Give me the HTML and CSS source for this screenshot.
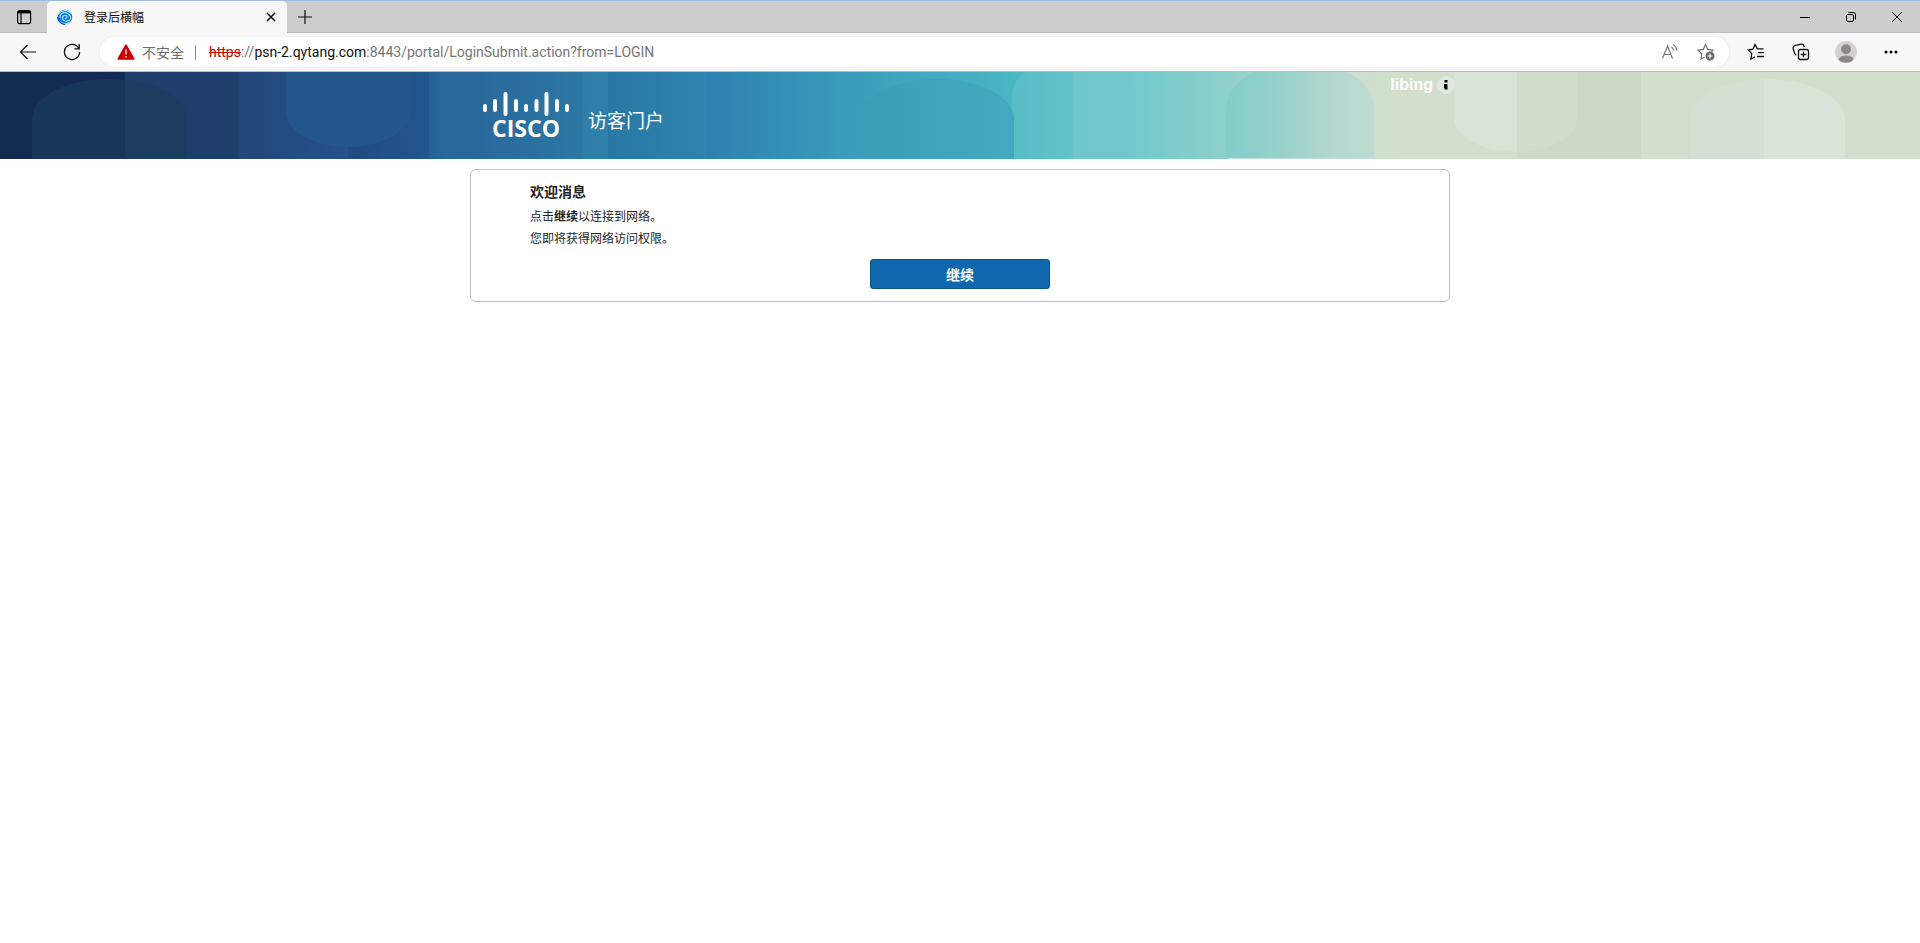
FILE: index.html
```html
<!DOCTYPE html>
<html lang="zh-CN">
<head>
<meta charset="utf-8">
<meta name="viewport" content="width=device-width, initial-scale=1">
<title>登录后横幅</title>
<link rel="stylesheet" href="styles.css">
</head>
<body>
<div class="tabstrip">
  <button class="icon-btn tab-menu" aria-label="标签操作菜单">
    <svg width="16" height="16" viewBox="0 0 16 16" fill="none" stroke="#000"><rect x="1.6" y="1.6" width="13" height="13" rx="2" stroke-width="1.2"/><path d="M1.6 3.2h13" stroke-width="2.400"/><path d="M5 4v10.500" stroke-width="1.200"/></svg>
  </button>
  <div class="tab">
    <svg width="16" height="16" viewBox="0 0 16 16" fill="none"><circle cx="8" cy="8" r="7.300" fill="#0877e8"/><path d="M1 5.500C4 1 11 0 14.500 5M3 9C2.500 4 8 1.500 12 5.500S12 13 8 12 5 6 8.500 6.500 9 10 8 9.500M1.500 11C4 15 9 16 12.500 13" stroke="#a9ecff" stroke-width="1.100"/><path d="M.6 8C1 12 3 15 8 15.500" stroke="#0a3cc4" stroke-width="1.200"/></svg>
    <span class="tab-title">登录后横幅</span>
    <button class="icon-btn tab-close" aria-label="关闭标签页">
      <svg width="10" height="10" viewBox="0 0 10 10" stroke="#000" stroke-width="1.500"><path d="M1 1l8 8M9 1L1 9"/></svg>
    </button>
  </div>
  <button class="icon-btn new-tab" aria-label="新建标签页">
    <svg width="16" height="16" viewBox="0 0 16 16" stroke="#111" stroke-width="1.200"><path d="M8 1v14M1 8h14"/></svg>
  </button>
  <div class="window-controls">
    <button class="icon-btn" aria-label="最小化"><svg width="12" height="12" viewBox="0 0 12 12" stroke="#000"><path d="M1 6.500h10"/></svg></button>
    <button class="icon-btn" aria-label="还原"><svg width="12" height="12" viewBox="0 0 12 12" fill="none" stroke="#000"><rect x="1.500" y="3.500" width="7" height="7" rx="1.500"/><path d="M3.500 1.500H8.500a2 2 0 0 1 2 2v5"/></svg></button>
    <button class="icon-btn" aria-label="关闭"><svg width="12" height="12" viewBox="0 0 12 12" stroke="#000"><path d="M1 1l10 10M11 1L1 11"/></svg></button>
  </div>
</div>

<div class="toolbar">
  <button class="icon-btn nav-btn" aria-label="返回"><svg width="18" height="18" viewBox="0 0 18 18" fill="none" stroke="#111" stroke-width="1.200"><path d="M17 9H1.500M8.500 2L1.500 9l7 7"/></svg></button>
  <button class="icon-btn nav-btn" aria-label="刷新"><svg width="18" height="18" viewBox="0 0 18 18" fill="none" stroke="#111" stroke-width="1.300"><path d="M15.800 5.500A7.600 7.600 0 1 0 16.600 9M16.200 1v4.800h-4.800"/></svg></button>
  <div class="address">
    <svg width="18" height="16" viewBox="0 0 18 16"><path d="M9 1.200L16.800 15H1.200z" fill="#c80000" stroke="#c80000" stroke-width="1.600" stroke-linejoin="round"/><path d="M9 5.500v5M9 12v1.600" stroke="#f3caca" stroke-width="1.600"/></svg>
    <span class="insecure">不安全</span>
    <span class="divider"></span>
    <div class="url" role="textbox" contenteditable="true" spellcheck="false" aria-label="地址栏"><span class="scheme">https</span>://<span class="host">psn-2.qytang.com</span>:8443/portal/LoginSubmit.action?from=LOGIN</div>
    <button class="icon-btn" aria-label="大声朗读"><svg width="18" height="18" viewBox="0 0 18 18" fill="none" stroke="#777" stroke-width="1.200"><path d="M1.500 15.500L6.500 3l5 12.500M3 11.500h7M10.500 4c1.300.8 1.900 1.900 2 3.500M12 1.500c2.500 1.300 3.700 3.200 3.800 6"/></svg></button>
    <button class="icon-btn" aria-label="收藏此页"><svg width="18" height="18" viewBox="0 0 18 18" fill="none" stroke="#6c6c6c" stroke-width="1.200"><path d="M7.500 14.200L4 16l.8-5.200L1 7.200l5.200-.8L8.500 1.500l2.300 4.900 5.200.8-1.500 1.500"/><circle cx="13" cy="13" r="4.500" fill="#686868" stroke="none"/><path d="M10.500 13h5M13 10.500v5" stroke="#fff"/></svg></button>
  </div>
  <div class="tools">
    <button class="icon-btn" aria-label="收藏夹"><svg width="18" height="18" viewBox="0 0 18 18" fill="none" stroke="#111" stroke-width="1.300"><path d="M10.300 5.900L8 1.500 5.900 6.200 1.300 7l3.400 3.500L4 16l4-2.300M10.300 5.900H16.500M11 9.700h6M10 13.500h7"/></svg></button>
    <button class="icon-btn" aria-label="集锦"><svg width="18" height="18" viewBox="0 0 18 18" fill="none" stroke="#111" stroke-width="1.300"><rect x="6.500" y="6.500" width="10" height="10" rx="2"/><path d="M11.500 8.700v5.600M8.700 11.500h5.600M4.300 12.200C3 11.700 2.600 11 2.300 9.700L1.200 5.500C.9 4 1.500 3.100 2.800 2.700L9 1.200c1.500-.3 2.500.3 2.900 1.700l.3 1.200"/></svg></button>
    <button class="icon-btn" aria-label="个人资料"><svg width="22" height="22" viewBox="0 0 22 22"><circle cx="11" cy="11" r="11" fill="#d4d2d0"/><circle cx="11" cy="8.300" r="5" fill="#8b8886"/><path d="M3.500 18.500C4.500 15.500 7 14.500 11 14.500s6.500 1 7.500 4C15 22.800 7 22.800 3.500 18.500z" fill="#8b8886"/></svg></button>
    <button class="icon-btn" aria-label="设置及其他"><svg width="16" height="4" viewBox="0 0 16 4"><circle cx="3" cy="2" r="1.500"/><circle cx="8" cy="2" r="1.500"/><circle cx="13" cy="2" r="1.500"/></svg></button>
  </div>
</div>

<header class="banner">
  <svg class="banner-art" viewBox="0 0 1920 87" preserveAspectRatio="none" aria-hidden="true">
    <defs>
      <linearGradient id="sky" gradientUnits="userSpaceOnUse" x1="0" y1="0" x2="1920" y2="0">
        <stop offset="0" stop-color="#142c50"/><stop offset=".0648" stop-color="#152a57"/>
        <stop offset=".0652" stop-color="#1d3e69"/><stop offset=".1238" stop-color="#1d3f6c"/>
        <stop offset=".1242" stop-color="#224678"/><stop offset=".1812" stop-color="#25528a"/>
        <stop offset=".1816" stop-color="#204a80"/><stop offset=".2234" stop-color="#22568e"/>
        <stop offset=".2238" stop-color="#246494"/><stop offset=".232" stop-color="#28699a"/>
        <stop offset=".24" stop-color="#27669a"/><stop offset=".3034" stop-color="#2c78a3"/>
        <stop offset=".3038" stop-color="#2d7fa7"/><stop offset=".3165" stop-color="#2d80a8"/>
        <stop offset=".3169" stop-color="#2778a4"/><stop offset=".3675" stop-color="#2e84ad"/>
        <stop offset=".3679" stop-color="#2d80b0"/><stop offset=".4" stop-color="#328db3"/>
        <stop offset=".445" stop-color="#3b9dbb"/><stop offset=".527" stop-color="#49b6c4"/>
        <stop offset=".558" stop-color="#5cc0c8"/><stop offset=".559" stop-color="#69c6c9"/>
        <stop offset=".6" stop-color="#76cbcc"/><stop offset=".637" stop-color="#8dd0cb"/>
        <stop offset=".67" stop-color="#a6d4cb"/><stop offset=".7" stop-color="#cbdecf"/>
        <stop offset=".73" stop-color="#d3dfcd"/><stop offset="1" stop-color="#d3dfcd"/>
      </linearGradient>
      <linearGradient id="mint" x1="0" x2="1"><stop offset="0" stop-color="#82cdc8"/><stop offset=".4" stop-color="#98d2ca"/><stop offset=".7" stop-color="#b3d7cf"/><stop offset="1" stop-color="#bddcd0"/></linearGradient>
      <linearGradient id="aqua" x1="0" x2="1"><stop offset="0" stop-color="#3b9db8"/><stop offset="1" stop-color="#42a9bf"/></linearGradient>
    </defs>
    <rect width="1920" height="87" fill="url(#sky)"/>
    <path d="M32 87V47C32 25 66 7 109 7s78 18 78 40v40z" fill="#17385b" fill-opacity=".85"/>
    <path d="M125 8C160 11 187 27 187 47v40H125z" fill="#1b3d60"/>
    <path d="M286 0v40c0 19 28 35 62 35s62-16 62-35V0z" fill="#23588a" fill-opacity=".9"/>
    <path d="M859 87V47C859 25 894 7 937 7s77 18 77 40v40z" fill="url(#aqua)"/>
    <path d="M920 8c8-1 20-1 32 0 36 4 62 19 62 39v40H920z" fill="#48b0c2" fill-opacity=".15"/>
    <path d="M1014 87V47q0-6-2-10V25q0-14 12-25h100q12 11 12 25v62z" fill="#6ec6cd" fill-opacity=".4"/>
    <path d="M1073 0h51q12 11 12 25v62h-63z" fill="#75c7cd" fill-opacity=".55"/>
    <path d="M1226 87V37c0-16 11-29 28-37h93c17 8 27 21 27 37v50z" fill="url(#mint)"/>
    <path d="M1228 86.500h146" stroke="#bfe1dc"/>
    <path d="M1517 0h124v87H1517z" fill="#ccd9c8"/>
    <path d="M1454 0v45c0 20 28 35 63 35V0z" fill="#d9e3d7"/>
    <path d="M1517 0h60v45c0 20-26 35-60 35z" fill="#d1ddcc"/>
    <path d="M1690 87V48c0-23 34-41 77-41s78 18 78 41v39z" fill="#d5e0d4"/>
    <path d="M1764 7c45 0 81 18 81 41v39h-81z" fill="#d9e3d7"/>
  </svg>
  <div class="banner-inner">
    <svg class="logo" width="86" height="56" viewBox="0 0 86 56" role="img" aria-label="Cisco">
      <path d="M2 14v4M12 9v9M22.500 2v20M33 9v9M43 14v4M53.500 9v9M63.500 2v20M74 9v9M84 14v4" stroke="#fff" stroke-width="4" stroke-linecap="round"/>
      <text class="logo-text" x="43" y="45" text-anchor="middle">CISCO</text>
    </svg>
    <h1 class="portal-name">访客门户</h1>
    <div class="user">
      <span>libing</span>
      <button class="info" aria-label="用户信息"><svg width="6" height="12" viewBox="0 0 6 12"><path d="M1.500 1h3v2.500h-3zM1 5h3.500v5.500H1.500V9H1z"/></svg></button>
    </div>
  </div>
</header>

<main class="card">
  <h2 class="card-title">欢迎消息</h2>
  <p class="card-text">点击<b>继续</b>以连接到网络。</p>
  <p class="card-text">您即将获得网络访问权限。</p>
  <button class="primary">继续</button>
</main>
</body>
</html>
```

FILE: styles.css
```css
* { box-sizing: border-box; }
body {
  margin: 0;
  background: #fff;
  color: #1e1e1e;
  font: 12px/22px "Liberation Sans", "Noto Sans CJK SC", sans-serif;
}
button { font: inherit; cursor: pointer; }
svg { display: block; flex: none; }
.icon-btn {
  display: flex;
  align-items: center;
  justify-content: center;
  padding: 0;
  border: 0;
  background: none;
}

/* tab strip */
.tabstrip {
  display: flex;
  height: 33px;
  border-top: 1px solid #9bbce0;
  background: #cdcdcd;
  box-shadow: inset 0 -1px #bdbdbd;
}
.tab-menu { width: 47px; }
.tab {
  display: flex;
  align-items: center;
  width: 240px;
  padding: 0 11px 0 10px;
  border-radius: 5px 5px 0 0;
  background: #f7f7f7;
}
.tab-title {
  flex: 1;
  margin-left: 11px;
  color: #111;
  font-family: "Noto Sans CJK SC", sans-serif;
}
.new-tab { width: 36px; }
.window-controls { display: flex; margin-left: auto; }
.window-controls .icon-btn { width: 46px; }

/* toolbar */
.toolbar {
  display: flex;
  align-items: center;
  height: 39px;
  padding: 0 6px;
  border-bottom: 1px solid #bbb;
  background: #f7f7f7;
}
.nav-btn { width: 44px; height: 36px; }
.address {
  display: flex;
  flex: 1;
  align-items: center;
  height: 30px;
  margin-left: 6px;
  padding: 0 14px 0 17px;
  border-radius: 15px;
  background: #fff;
  box-shadow: 0 0 3px #e6e6e6;
}
.address .icon-btn { margin-left: 18px; }
.insecure {
  margin-left: 7px;
  color: #6b6b6b;
  font: 14px/20px "Noto Sans CJK SC", sans-serif;
}
.divider { width: 1px; height: 15px; margin: 0 13px 0 11px; background: #888; }
.url {
  flex: 1;
  outline: 0;
  color: #767676;
  font: 14px/20px Roboto, sans-serif;
  white-space: nowrap;
}
.scheme { color: #c80000; text-decoration: line-through; }
.host { color: #111; }
.tools { display: flex; margin: 0 1px 0 4px; }
.tools .icon-btn { width: 45px; height: 30px; }

/* portal banner */
.banner { display: grid; min-height: 87px; }
.banner-art { grid-area: 1 / 1; width: 100%; height: 100%; }
.banner-inner {
  grid-area: 1 / 1;
  z-index: 1;
  display: flex;
  align-items: flex-start;
  width: 100%;
  max-width: 990px;
  margin: 0 auto;
  padding-left: 18px;
  color: #fff;
}
.logo { margin-top: 20px; }
.logo-text { fill: #fff; font: bold 23px/1 "Open Sans", sans-serif; }
.portal-name {
  margin: 35px 0 0 19px;
  font: 19px/26px "Noto Sans CJK SC", sans-serif;
}
.user {
  display: flex;
  align-items: center;
  gap: 4px;
  margin: 2px 0 0 auto;
  font: bold 16px/22px "Liberation Sans", sans-serif;
}
.info {
  display: flex;
  align-items: center;
  justify-content: center;
  width: 18px;
  height: 18px;
  padding: 0;
  border: 0;
  border-radius: 50%;
  background: #dfe8dd;
}

/* message card */
.card {
  max-width: 980px;
  margin: 10px auto 0;
  padding: 10px 59px 12px;
  border: 1px solid #c0c0c0;
  border-radius: 6px;
}
.card-title {
  margin: 0 0 4px;
  font: bold 14px/22px "Noto Sans CJK SC", sans-serif;
}
.card-text { margin: 0; }
.primary {
  display: block;
  width: 180px;
  height: 30px;
  margin: 9px auto 0;
  padding: 0;
  border: 1px solid #0b5386;
  border-radius: 3px;
  background: #0f68ad;
  color: #fff;
  font: bold 14px/26px "Noto Sans CJK SC", sans-serif;
}
```
